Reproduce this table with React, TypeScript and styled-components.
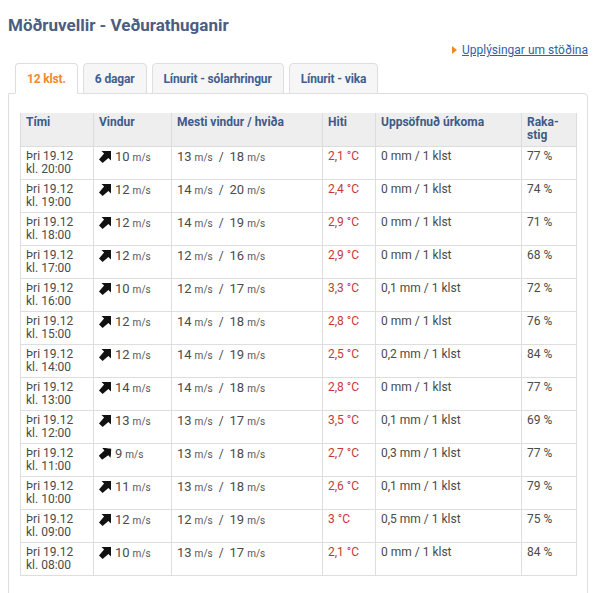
import React from "react";
import styled, { createGlobalStyle } from "styled-components";

const GlobalStyle = createGlobalStyle`
  html, body { margin: 0; padding: 0; background: #fff; }
  body { font-family: Roboto, "Liberation Sans", Arial, sans-serif; color: #444; }
`;

const Page = styled.div`
  padding: 0 12px 0 8px;
  width: 580px;
`;

const Title = styled.h1`
  margin: 0;
  padding-top: 14px;
  font-size: 17px;
  line-height: 22px;
  font-weight: 700;
  color: #4a5d82;
`;

const LinkRow = styled.div`
  display: flex;
  justify-content: flex-end;
  align-items: center;
  gap: 5px;
  margin-top: 6px;
  height: 16px;
`;

const Triangle = styled.span`
  width: 0;
  height: 0;
  border-top: 4px solid transparent;
  border-bottom: 4px solid transparent;
  border-left: 5px solid #f08a24;
`;

const InfoLink = styled.a`
  font-size: 12px;
  color: #3460a8;
  text-decoration: underline;
  line-height: 16px;
`;

const Tabs = styled.div`
  display: flex;
  gap: 5px;
  padding-left: 7px;
  margin-top: 5px;
  position: relative;
  z-index: 1;
`;

const Tab = styled.div<{ $active?: boolean }>`
  height: 29px;
  padding: 0 11px;
  display: flex;
  align-items: center;
  font-size: 12px;
  letter-spacing: -0.15px;
  font-weight: 700;
  border: 1px solid #dedede;
  border-bottom: ${(p) => (p.$active ? "1px solid #fff" : "1px solid #dedede")};
  border-radius: 4px 4px 0 0;
  background: ${(p) => (p.$active ? "#fff" : "#f6f6f6")};
  color: ${(p) => (p.$active ? "#f0892a" : "#3f5f93")};
  margin-bottom: -1px;
`;

const Panel = styled.div`
  border: 1px solid #dedede;
  border-radius: 0 4px 0 0;
  padding: 19px 11px 20px;
`;

const Table = styled.table`
  width: 556px;
  border-collapse: collapse;
  table-layout: fixed;
  font-size: 12px;
`;

const Th = styled.th`
  background: #eeeeee;
  border: 1px solid #dcdcdc;
  border-top: none;
  text-align: left;
  vertical-align: top;
  font-weight: 700;
  color: #3f5a88;
  padding: 3px 5px 3px;
  line-height: 13px;
  height: 27px;
`;

const Td = styled.td`
  border: 1px solid #dedede;
  vertical-align: top;
  padding: 3px 5px 3px;
  line-height: 13px;
  height: 26px;
  color: #4a4a4a;
  white-space: nowrap;
`;

const TempTd = styled(Td)`
  color: #c23a3a;
`;

const WindWrap = styled.span`
  display: inline-flex;
  align-items: center;
  gap: 4px;
`;

const Unit = styled.span`
  font-size: 10px;
  color: #555;
`;

const Big = styled.span`
  font-size: 13px;
`;

const ArrowSvg = styled.svg<{ $rot: number }>`
  width: 12px;
  height: 12px;
  transform: rotate(${(p) => p.$rot}deg);
  flex: none;
`;

const WindArrow = ({ rot }: { rot: number }) => (
  <ArrowSvg viewBox="0 0 12 12" $rot={rot}>
    <path d="M12 0 L12 9.5 L9.4 6.9 L3.6 12 L0 8.4 L5.1 2.6 L2.5 0 Z" fill="#111" />
  </ArrowSvg>
);

type Row = [string, number, number, number, string, string, number, number];

const rows: Row[] = [
  ["20:00", 10, 13, 18, "2,1", "0", 77, 0],
  ["19:00", 12, 14, 20, "2,4", "0", 74, 0],
  ["18:00", 12, 14, 19, "2,9", "0", 71, 0],
  ["17:00", 12, 12, 16, "2,9", "0", 68, 0],
  ["16:00", 10, 12, 17, "3,3", "0,1", 72, 0],
  ["15:00", 12, 14, 18, "2,8", "0", 76, 0],
  ["14:00", 12, 14, 19, "2,5", "0,2", 84, 0],
  ["13:00", 14, 14, 18, "2,8", "0", 77, 0],
  ["12:00", 13, 13, 17, "3,5", "0,1", 69, 0],
  ["11:00", 9, 13, 18, "2,7", "0,3", 77, 5],
  ["10:00", 11, 13, 18, "2,6", "0,1", 79, 0],
  ["09:00", 12, 12, 19, "3", "0,5", 75, 0],
  ["08:00", 10, 13, 17, "2,1", "0", 84, 0],
];

const tabs = ["12 klst.", "6 dagar", "Línurit - sólarhringur", "Línurit - vika"];

export default function App() {
  return (
    <>
      <GlobalStyle />
      <Page>
        <Title>Möðruvellir - Veðurathuganir</Title>
        <LinkRow>
          <Triangle />
          <InfoLink href="#">Upplýsingar um stöðina</InfoLink>
        </LinkRow>
        <Tabs>
          {tabs.map((t, i) => (
            <Tab key={t} $active={i === 0}>
              {t}
            </Tab>
          ))}
        </Tabs>
        <Panel>
          <Table>
            <colgroup>
              <col style={{ width: 73 }} />
              <col style={{ width: 78 }} />
              <col style={{ width: 151 }} />
              <col style={{ width: 53 }} />
              <col style={{ width: 146 }} />
              <col style={{ width: 55 }} />
            </colgroup>
            <thead>
              <tr>
                <Th>Tími</Th>
                <Th>Vindur</Th>
                <Th>Mesti vindur / hviða</Th>
                <Th>Hiti</Th>
                <Th>Uppsöfnuð úrkoma</Th>
                <Th>
                  Raka-
                  <br />
                  stig
                </Th>
              </tr>
            </thead>
            <tbody>
              {rows.map(([time, wind, max, gust, temp, rain, hum, rot]) => (
                <tr key={time}>
                  <Td>
                    Þri 19.12
                    <br />
                    kl. {time}
                  </Td>
                  <Td>
                    <WindWrap>
                      <WindArrow rot={rot} />
                      <span>
                        <Big>{wind}</Big> <Unit>m/s</Unit>
                      </span>
                    </WindWrap>
                  </Td>
                  <Td>
                    <Big>{max}</Big> <Unit>m/s</Unit>&nbsp; /&nbsp; <Big>{gust}</Big> <Unit>m/s</Unit>
                  </Td>
                  <TempTd>{temp} °C</TempTd>
                  <Td>{rain} mm / 1 klst</Td>
                  <Td>{hum} %</Td>
                </tr>
              ))}
            </tbody>
          </Table>
        </Panel>
      </Page>
    </>
  );
}
